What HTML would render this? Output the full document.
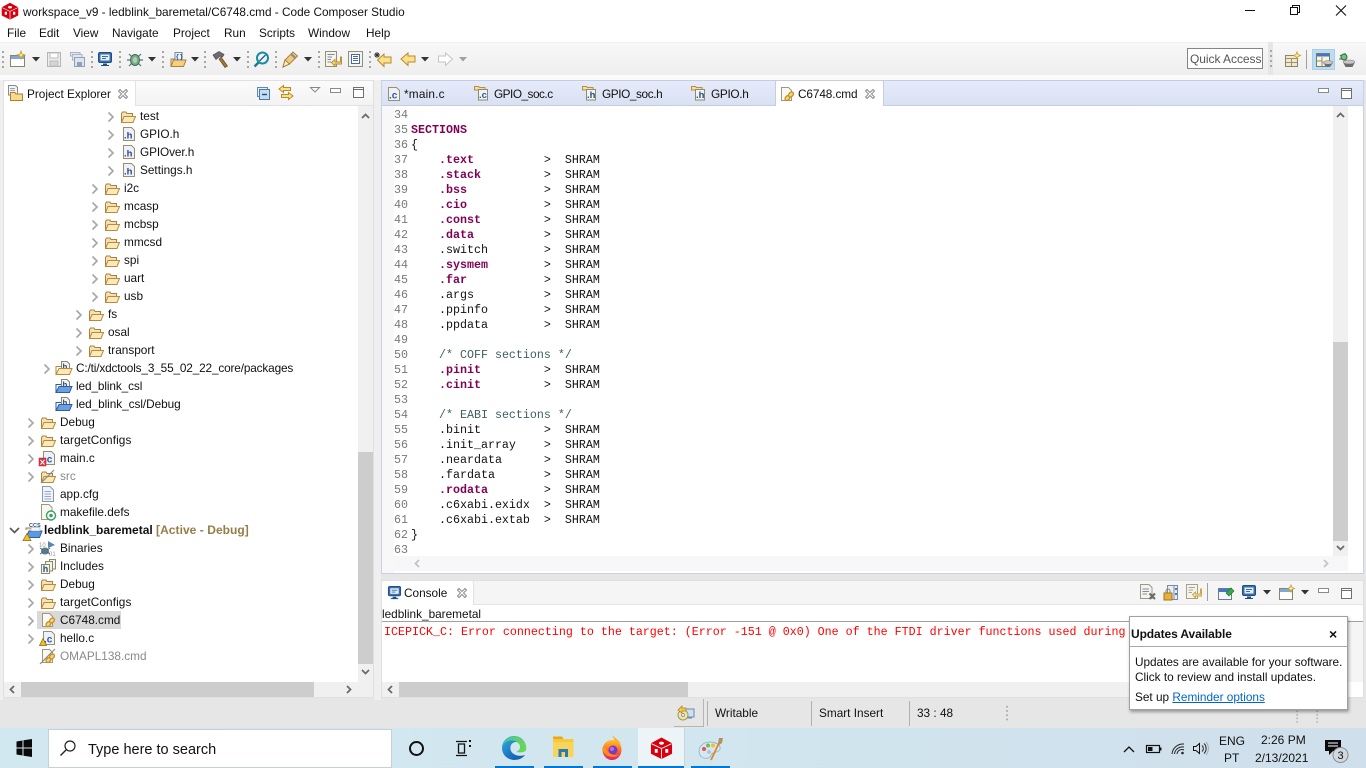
<!DOCTYPE html>
<html><head><meta charset="utf-8"><title>Code Composer Studio</title>
<style>
*{box-sizing:border-box}
html,body{margin:0;padding:0;width:1366px;height:768px;overflow:hidden;background:#e6e6e6;font-family:"Liberation Sans",sans-serif;font-size:11.8px;color:#111}
.a{position:absolute}
.t{position:absolute;white-space:pre;line-height:16px;height:16px}
.m{position:absolute;white-space:pre;font-family:"Liberation Mono",monospace;font-size:11.67px;line-height:15px;height:15px;color:#111;margin-top:1px}
.n{position:absolute;left:381px;width:27px;text-align:right;font-family:"Liberation Mono",monospace;font-size:11.67px;line-height:15px;color:#787878;margin-top:1px}
.k{color:#7f0055;font-weight:bold}
.c{color:#3f5f5f}
svg{position:absolute;left:0;top:0}
.g{color:#8a8a8a}
</style></head><body>
<div class="a" style="left:0;top:0;width:1366px;height:42px;background:#fff"></div>
<div class="a" style="left:0;top:42px;width:1268px;height:33px;background:linear-gradient(#f8f8f8,#eeeeee);border-top:1px solid #f0f0f0"></div>
<div class="a" style="left:1273px;top:42px;width:93px;height:33px;background:linear-gradient(#f8f8f8,#eeeeee);border-top:1px solid #f0f0f0"></div>
<div class="a" style="left:0;top:75px;width:1366px;height:5px;background:#fafafa"></div>
<div class="a" style="left:0;top:80px;width:3px;height:620px;background:#efefef"></div>
<div class="a" style="left:374px;top:80px;width:7px;height:620px;background:#efefef"></div>
<div class="t" style="left:23px;top:4px">workspace_v9 - ledblink_baremetal/C6748.cmd - Code Composer Studio</div>
<div class="t" style="left:7px;top:25px">File</div><div class="t" style="left:39px;top:25px">Edit</div><div class="t" style="left:73px;top:25px">View</div><div class="t" style="left:112px;top:25px">Navigate</div><div class="t" style="left:173px;top:25px">Project</div><div class="t" style="left:224px;top:25px">Run</div><div class="t" style="left:259px;top:25px">Scripts</div><div class="t" style="left:308px;top:25px">Window</div><div class="t" style="left:366px;top:25px">Help</div>

<!-- left panel -->
<div class="a" style="left:3px;top:80px;width:371px;height:618px;background:#fff;border:1px solid #e0e0e0"></div>
<div class="a" style="left:4px;top:81px;width:369px;height:24px;background:linear-gradient(#fbfbfb,#f3f3f3)"></div>
<div class="a" style="left:3px;top:80px;width:133px;height:26px;background:#fff;border:1px solid #e2e2e2;border-bottom:0;border-radius:3px 3px 0 0"></div>
<div class="a" style="left:136px;top:105px;width:237px;height:1px;background:#e2e2e2"></div>
<div class="a" style="left:358px;top:106px;width:15px;height:576px;background:#f0f0f0"></div>
<div class="a" style="left:358px;top:452px;width:15px;height:212px;background:#cdcdcd"></div>
<div class="a" style="left:4px;top:682px;width:369px;height:15px;background:#f0f0f0"></div>
<div class="a" style="left:21px;top:682px;width:293px;height:15px;background:#cdcdcd"></div>
<div class="a" style="left:37px;top:611px;width:84px;height:18px;background:#d9d9d9"></div>
<div class="t" style="left:27px;top:86px">Project Explorer</div>
<div class="t" style="left:140px;top:108px">test</div>
<div class="t" style="left:140px;top:126px">GPIO.h</div>
<div class="t" style="left:140px;top:144px;letter-spacing:-.1px">GPIOver.h</div>
<div class="t" style="left:140px;top:162px">Settings.h</div>
<div class="t" style="left:124px;top:180px">i2c</div>
<div class="t" style="left:124px;top:198px">mcasp</div>
<div class="t" style="left:124px;top:216px">mcbsp</div>
<div class="t" style="left:124px;top:234px">mmcsd</div>
<div class="t" style="left:124px;top:252px">spi</div>
<div class="t" style="left:124px;top:270px">uart</div>
<div class="t" style="left:124px;top:288px">usb</div>
<div class="t" style="left:108px;top:306px">fs</div>
<div class="t" style="left:108px;top:324px">osal</div>
<div class="t" style="left:108px;top:342px">transport</div>
<div class="t" style="left:76px;top:360px;letter-spacing:-.15px">C:/ti/xdctools_3_55_02_22_core/packages</div>
<div class="t" style="left:76px;top:378px;letter-spacing:-.1px">led_blink_csl</div>
<div class="t" style="left:76px;top:396px;letter-spacing:-.05px">led_blink_csl/Debug</div>
<div class="t" style="left:60px;top:414px">Debug</div>
<div class="t" style="left:60px;top:432px;letter-spacing:.1px">targetConfigs</div>
<div class="t" style="left:60px;top:450px">main.c</div>
<div class="t g" style="left:60px;top:468px">src</div>
<div class="t" style="left:60px;top:486px">app.cfg</div>
<div class="t" style="left:60px;top:504px">makefile.defs</div>
<div class="t" style="left:44px;top:522px;font-weight:bold;font-size:12px">ledblink_baremetal <span style="color:#957d47;letter-spacing:.05px">[Active - Debug]</span></div>
<div class="t" style="left:60px;top:540px">Binaries</div>
<div class="t" style="left:60px;top:558px">Includes</div>
<div class="t" style="left:60px;top:576px">Debug</div>
<div class="t" style="left:60px;top:594px;letter-spacing:.1px">targetConfigs</div>
<div class="t" style="left:60px;top:612px">C6748.cmd</div>
<div class="t" style="left:60px;top:630px">hello.c</div>
<div class="t g" style="left:60px;top:648px">OMAPL138.cmd</div>

<!-- editor -->
<div class="a" style="left:381px;top:80px;width:983px;height:494px;background:#fff;border:1px solid #c9d1e4;border-top:1px solid #c3cce0"></div>
<div class="a" style="left:382px;top:81px;width:981px;height:24px;background:linear-gradient(#e6ebfb,#d9e1f2)"></div>
<div class="a" style="left:382px;top:105px;width:981px;height:1px;background:#c5cde0"></div>
<div class="a" style="left:775px;top:80px;width:109px;height:26px;background:#fff;border:1px solid #c5cde0;border-bottom:0;border-radius:2px 2px 0 0"></div>
<div class="a" style="left:382px;top:106px;width:12px;height:467px;background:#f8f8f8"></div>
<div class="a" style="left:1333px;top:106px;width:15px;height:450px;background:#f0f0f0"></div>
<div class="a" style="left:1333px;top:342px;width:15px;height:199px;background:#cdcdcd"></div>
<div class="a" style="left:394px;top:556px;width:954px;height:15px;background:#f7f7f7"></div>
<div class="t" style="left:404px;top:86px;letter-spacing:.2px">*main.c</div>
<div class="t" style="left:494px;top:86px;letter-spacing:-.5px">GPIO_soc.c</div>
<div class="t" style="left:602px;top:86px;letter-spacing:-.4px">GPIO_soc.h</div>
<div class="t" style="left:711px;top:86px;letter-spacing:-.3px">GPIO.h</div>
<div class="t" style="left:798px;top:86px;letter-spacing:-.1px">C6748.cmd</div>

<div class="n" style="top:107px">34</div><div class="n" style="top:122px">35</div><div class="n" style="top:137px">36</div><div class="n" style="top:152px">37</div><div class="n" style="top:167px">38</div><div class="n" style="top:182px">39</div><div class="n" style="top:197px">40</div><div class="n" style="top:212px">41</div><div class="n" style="top:227px">42</div><div class="n" style="top:242px">43</div><div class="n" style="top:257px">44</div><div class="n" style="top:272px">45</div><div class="n" style="top:287px">46</div><div class="n" style="top:302px">47</div><div class="n" style="top:317px">48</div><div class="n" style="top:332px">49</div><div class="n" style="top:347px">50</div><div class="n" style="top:362px">51</div><div class="n" style="top:377px">52</div><div class="n" style="top:392px">53</div><div class="n" style="top:407px">54</div><div class="n" style="top:422px">55</div><div class="n" style="top:437px">56</div><div class="n" style="top:452px">57</div><div class="n" style="top:467px">58</div><div class="n" style="top:482px">59</div><div class="n" style="top:497px">60</div><div class="n" style="top:512px">61</div><div class="n" style="top:527px">62</div><div class="n" style="top:542px">63</div>

<div class="m" style="left:411px;top:122px"><span class="k">SECTIONS</span></div>
<div class="m" style="left:411px;top:137px">{</div>
<div class="m" style="left:411px;top:152px">    <span class="k">.text</span>          &gt;  SHRAM</div>
<div class="m" style="left:411px;top:167px">    <span class="k">.stack</span>         &gt;  SHRAM</div>
<div class="m" style="left:411px;top:182px">    <span class="k">.bss</span>           &gt;  SHRAM</div>
<div class="m" style="left:411px;top:197px">    <span class="k">.cio</span>           &gt;  SHRAM</div>
<div class="m" style="left:411px;top:212px">    <span class="k">.const</span>         &gt;  SHRAM</div>
<div class="m" style="left:411px;top:227px">    <span class="k">.data</span>          &gt;  SHRAM</div>
<div class="m" style="left:411px;top:242px">    .switch        &gt;  SHRAM</div>
<div class="m" style="left:411px;top:257px">    <span class="k">.sysmem</span>        &gt;  SHRAM</div>
<div class="m" style="left:411px;top:272px">    <span class="k">.far</span>           &gt;  SHRAM</div>
<div class="m" style="left:411px;top:287px">    .args          &gt;  SHRAM</div>
<div class="m" style="left:411px;top:302px">    .ppinfo        &gt;  SHRAM</div>
<div class="m" style="left:411px;top:317px">    .ppdata        &gt;  SHRAM</div>
<div class="m" style="left:411px;top:347px">    <span class="c">/* COFF sections */</span></div>
<div class="m" style="left:411px;top:362px">    <span class="k">.pinit</span>         &gt;  SHRAM</div>
<div class="m" style="left:411px;top:377px">    <span class="k">.cinit</span>         &gt;  SHRAM</div>
<div class="m" style="left:411px;top:407px">    <span class="c">/* EABI sections */</span></div>
<div class="m" style="left:411px;top:422px">    .binit         &gt;  SHRAM</div>
<div class="m" style="left:411px;top:437px">    .init_array    &gt;  SHRAM</div>
<div class="m" style="left:411px;top:452px">    .neardata      &gt;  SHRAM</div>
<div class="m" style="left:411px;top:467px">    .fardata       &gt;  SHRAM</div>
<div class="m" style="left:411px;top:482px">    <span class="k">.rodata</span>        &gt;  SHRAM</div>
<div class="m" style="left:411px;top:497px">    .c6xabi.exidx  &gt;  SHRAM</div>
<div class="m" style="left:411px;top:512px">    .c6xabi.extab  &gt;  SHRAM</div>
<div class="m" style="left:411px;top:527px">}</div>

<!-- console -->
<div class="a" style="left:381px;top:580px;width:983px;height:118px;background:#fff;border:1px solid #e0e0e0"></div>
<div class="a" style="left:382px;top:581px;width:981px;height:24px;background:#f5f5f5;border-bottom:1px solid #e4e4e4"></div>
<div class="a" style="left:381px;top:580px;width:93px;height:25px;background:#fff;border:1px solid #e2e2e2;border-bottom:0;border-radius:3px 3px 0 0"></div>
<div class="t" style="left:404px;top:585px">Console</div>
<div class="t" style="left:382px;top:606px">ledblink_baremetal</div>
<div class="a" style="left:382px;top:621px;width:981px;height:1px;background:#a0a0a0"></div>
<div class="m" style="left:384px;top:624px;color:#ff0000;width:745px;overflow:hidden">ICEPICK_C: Error connecting to the target: (Error -151 @ 0x0) One of the FTDI driver functions used during</div>
<div class="a" style="left:1348px;top:622px;width:15px;height:60px;background:#f5f5f5"></div>
<div class="a" style="left:382px;top:682px;width:966px;height:15px;background:#f0f0f0"></div>
<div class="a" style="left:399px;top:682px;width:289px;height:15px;background:#cdcdcd"></div>

<!-- status -->
<div class="a" style="left:674px;top:699px;width:30px;height:28px;border-right:1px solid #b4b4b4;border-bottom:1px solid #b4b4b4"></div>
<div class="a" style="left:707px;top:701px;width:1px;height:25px;background:#b0b0b0"></div>
<div class="a" style="left:811px;top:701px;width:1px;height:25px;background:#b0b0b0"></div>
<div class="a" style="left:909px;top:701px;width:1px;height:25px;background:#b0b0b0"></div>
<div class="t" style="left:715px;top:705px">Writable</div>
<div class="t" style="left:819px;top:705px">Smart Insert</div>
<div class="t" style="left:917px;top:705px">33 : 48</div>

<!-- taskbar -->
<div class="a" style="left:0;top:728px;width:1366px;height:40px;background:linear-gradient(90deg,#d2e8f0 0,#d1e6ee 50%,#cfdfec 100%)"></div>
<div class="a" style="left:48px;top:729px;width:344px;height:39px;background:#fff;border:1px solid #c8d0d4"></div>
<div class="a" style="left:638px;top:728px;width:46px;height:40px;background:#ecf4f8"></div>
<div class="a" style="left:495px;top:766px;width:39px;height:2px;background:#0078d7"></div>
<div class="a" style="left:544px;top:766px;width:39px;height:2px;background:#0078d7"></div>
<div class="a" style="left:593px;top:766px;width:39px;height:2px;background:#0078d7"></div>
<div class="a" style="left:638px;top:766px;width:46px;height:2px;background:#0078d7"></div>
<div class="a" style="left:691px;top:766px;width:39px;height:2px;background:#0078d7"></div>
<div class="t" style="left:88px;top:742px;font-size:14.5px">Type here to search</div>
<div class="t" style="left:1219px;top:733px;font-size:12px">ENG</div>
<div class="t" style="left:1224px;top:750px;font-size:12px">PT</div>
<div class="t" style="left:1261px;top:732px;font-size:12px">2:26 PM</div>
<div class="t" style="left:1255px;top:750px;font-size:12px">2/13/2021</div>

<!-- Quick access -->
<div class="a" style="left:1187px;top:48px;width:76px;height:21px;background:#fff;border:1px solid #858585"></div>
<div class="t" style="left:1190px;top:51px;color:#555;font-size:12px;letter-spacing:-.05px">Quick Access</div>
<div class="a" style="left:1312px;top:49px;width:23px;height:21px;background:#bcdcf6;border:1px solid #a6d0f0"></div>

<svg width="1366" height="768" viewBox="0 0 1366 768" xmlns="http://www.w3.org/2000/svg">
<defs>
<linearGradient id="eg" x1="0" y1="0" x2="1" y2="1"><stop offset="0" stop-color="#36b0d8"/><stop offset=".6" stop-color="#1a6fc0"/><stop offset="1" stop-color="#0b5aa8"/></linearGradient>
<linearGradient id="eg2" x1="0" y1="0" x2="1" y2="0"><stop offset="0" stop-color="#3fc6a8"/><stop offset="1" stop-color="#6cd84e"/></linearGradient>
<linearGradient id="ff" x1="0" y1="0" x2="0" y2="1"><stop offset="0" stop-color="#ffc428"/><stop offset=".5" stop-color="#ff6b28"/><stop offset="1" stop-color="#e0206a"/></linearGradient>
<symbol id="ch" viewBox="0 0 8 12"><path d="M1.500 1.500L6 6L1.500 10.500" fill="none" stroke="#a8a8a8" stroke-width="1.700"/></symbol>
<symbol id="f" viewBox="0 0 16 16"><path d="M1.500 13.500V4.500L2.500 3H6L7 4.500H12.500V7" fill="#f6e2b0" stroke="#a9803f"/><path d="M1.500 13.500L4 7.500H15.500L13 13.500Z" fill="#fde9b8" stroke="#b88a3e"/></symbol>
<symbol id="fs" viewBox="0 0 16 16"><path d="M1.500 13.500V4.500L2.500 3H6L7 4.500H12.500V7" fill="#f6e2b0" stroke="#a9803f"/><path d="M1.500 13.500L4 7.500H15.500L13 13.500Z" fill="#fde9b8" stroke="#b88a3e"/><path d="M1 14L14 1" stroke="#8a8a8a" stroke-width="1.200"/></symbol>
<symbol id="h" viewBox="0 0 16 16"><path d="M2.500 1.500H10.500L13.500 4.500V14.500H2.500Z" fill="#eef2f8" stroke="#98906c"/><text x="3" y="12.500" font-family="Liberation Sans" font-weight="bold" font-size="9.500" fill="#2c4a7c">.h</text></symbol>
<symbol id="c" viewBox="0 0 16 16"><path d="M2.500 1.500H10.500L13.500 4.500V14.500H2.500Z" fill="#eef2f8" stroke="#98906c"/><text x="3" y="12.500" font-family="Liberation Sans" font-weight="bold" font-size="10" fill="#2c5a9c">.c</text></symbol>
<symbol id="fh" viewBox="0 0 17 16"><path d="M.5 1.500H4.500L5.500 2.500H11V5H.5Z" fill="#f6df9e" stroke="#b59040"/><path d="M4.500 4.500H13.500V15H4.500Z" fill="#f0f3f8" stroke="#8f8a6a"/><text x="5" y="13" font-family="Liberation Sans" font-weight="bold" font-size="9.500" fill="#2c4a7c">.h</text></symbol>
<symbol id="fc" viewBox="0 0 17 16"><path d="M.5 1.500H4.500L5.500 2.500H11V5H.5Z" fill="#f6df9e" stroke="#b59040"/><path d="M4.500 4.500H13.500V15H4.500Z" fill="#f0f3f8" stroke="#8f8a6a"/><text x="5" y="13" font-family="Liberation Sans" font-weight="bold" font-size="9.500" fill="#2c5a9c">.c</text></symbol>
<symbol id="cmd" viewBox="0 0 16 16"><path d="M2.500 1.500H9.500L12.500 4.500V14.500H2.500Z" fill="#f8f8f4" stroke="#a0987a"/><g fill="none" stroke="#c8922a" stroke-width="1.400"><ellipse cx="8.500" cy="12" rx="2.800" ry="2" transform="rotate(-45 8.500 12)" fill="#f6d878"/><ellipse cx="12" cy="8.500" rx="2.800" ry="2" transform="rotate(-45 12 8.500)" fill="#f6d878"/></g></symbol>
<symbol id="pk" viewBox="0 0 18 16"><path d="M6.500 1.500H12L14.500 4V11H6.500Z" fill="#f1f4f8" stroke="#8a8468"/><text x="7.500" y="9.500" font-family="Liberation Sans" font-weight="bold" font-size="8" fill="#2c4a7c">h</text><path d="M1 14.500L4 8.500H17L14.500 14.500Z" fill="#fde9b8" stroke="#b88a3e"/><path d="M1 14.500V6.500H6" fill="none" stroke="#b88a3e"/></symbol>
<symbol id="pb" viewBox="0 0 18 16"><path d="M6.500 1.500H12L14.500 4V11H6.500Z" fill="#f1f4f8" stroke="#8a8468"/><text x="7.500" y="9.500" font-family="Liberation Sans" font-weight="bold" font-size="8" fill="#2c4a7c">h</text><path d="M1 14.500L4 8.500H17L14.500 14.500Z" fill="#6c9fe0" stroke="#2a5fa8"/><path d="M1 14.500V6.500H6" fill="none" stroke="#2a5fa8"/></symbol>
<symbol id="x" viewBox="0 0 12 12"><path d="M1.500 3L3 1.500L6 4.500L9 1.500L10.500 3L7.500 6L10.500 9L9 10.500L6 7.500L3 10.500L1.500 9L4.500 6Z" fill="#fff" stroke="#8c8c8c"/></symbol>
<symbol id="dots" viewBox="0 0 3 20"><g fill="#a8a8a0"><rect y="1" width="2" height="2"/><rect y="6" width="2" height="2"/><rect y="11" width="2" height="2"/><rect y="16" width="2" height="2"/></g></symbol>
<symbol id="ar" viewBox="0 0 8 5"><path d="M0 0H8L4 4.500Z" fill="#333"/></symbol>
<symbol id="mon" viewBox="0 0 16 16"><rect x="1.500" y="1.500" width="13" height="10" rx="1.500" fill="#3a6ea8" stroke="#1f4e86"/><rect x="3.500" y="3.500" width="9" height="6" fill="#e6eff8"/><path d="M5 5.500H11M5 7.500H9" stroke="#3a6ea8"/><path d="M6 12.500H10V14H12V15H4V14H6Z" fill="#1f4e86"/></symbol>
<symbol id="mn" viewBox="0 0 12 8"><rect x=".5" y="1.500" width="10" height="4" fill="#fff" stroke="#8a8a8a"/></symbol>
<symbol id="mx" viewBox="0 0 12 12"><rect x=".5" y=".5" width="10" height="10" fill="#fff" stroke="#707070"/><path d="M1 2.500H10" stroke="#707070"/></symbol>
<symbol id="cube" viewBox="0 0 24 24"><path d="M12 1L23 7V18L12 23.500L1 18V7Z" fill="#d8000c"/><path d="M1.500 7.500L12 12.500L22.500 7.500M12 12.500V23" fill="none" stroke="#fff" stroke-width=".9"/><ellipse cx="12" cy="7" rx="2.600" ry="1.600" fill="#fff"/><rect x="5" y="13" width="3" height="4" fill="#fff"/><rect x="16" y="13" width="3" height="4" fill="#fff"/></symbol>
</defs>

<!-- title icon -->
<use href="#cube" x="1" y="2" width="18" height="18"/>
<!-- window controls -->
<path d="M1245 10.500H1255" stroke="#111"/>
<path d="M1290.500 7.500H1297.500V14.500H1290.500ZM1292.500 7V5.500H1299.500V12.500H1298" fill="none" stroke="#111"/>
<path d="M1336 5.500L1346 15.500M1346 5.500L1336 15.500" stroke="#111" stroke-width="1.100"/>

<!-- toolbar separators -->
<use href="#dots" x="2" y="50" width="3" height="20"/><use href="#dots" x="91" y="50" width="3" height="20"/><use href="#dots" x="119" y="50" width="3" height="20"/><use href="#dots" x="162" y="50" width="3" height="20"/><use href="#dots" x="204" y="50" width="3" height="20"/><use href="#dots" x="247" y="50" width="3" height="20"/><use href="#dots" x="275" y="50" width="3" height="20"/><use href="#dots" x="318" y="50" width="3" height="20"/><use href="#dots" x="369" y="50" width="3" height="20"/><use href="#dots" x="1270" y="48" width="3" height="22"/>
<use href="#ar" x="32" y="57" width="8" height="5"/><use href="#ar" x="148" y="57" width="8" height="5"/><use href="#ar" x="191" y="57" width="8" height="5"/><use href="#ar" x="233" y="57" width="8" height="5"/><use href="#ar" x="304" y="57" width="8" height="5"/><use href="#ar" x="421" y="57" width="8" height="5"/>
<path d="M459 57H467L463 61.500Z" fill="#a0a0a0"/>
<!-- new -->
<rect x="10.500" y="55.500" width="14" height="11" fill="#fff" stroke="#8a8468"/><rect x="11" y="56" width="13" height="3" fill="#7ea8d8"/><path d="M21 51L22 54L25 55L22 56L21 59L20 56L17 55L20 54Z" fill="#fff0a8" stroke="#c89a28" stroke-width=".8"/>
<!-- save -->
<path d="M47.500 52.500H60.500V66.500H47.500Z" fill="#ececec" stroke="#b4b4b4"/><rect x="50" y="53" width="8" height="5" fill="#fff" stroke="#bcbcbc"/><rect x="50" y="61" width="8" height="5" fill="#d4d4d4" stroke="#bcbcbc"/>
<path d="M70.500 52.500H80V56H70.500Z" fill="#e4e8f0" stroke="#aab4c4"/><path d="M72.500 54.500H82V60H72.500Z" fill="#e4e8f0" stroke="#aab4c4"/><path d="M74.500 57.500H84.500V66.500H74.500Z" fill="#dce4f0" stroke="#90a0b8"/><rect x="77" y="62" width="5" height="4" fill="#90a0b8"/>
<use href="#mon" x="97" y="51" width="16" height="16"/>
<!-- bug -->
<g transform="translate(127,51)"><path d="M2 3L5 6M14 3L11 6M0 9H3M16 9H13M2 15L5 12M14 15L11 12" stroke="#56707a" stroke-width="1.200"/><ellipse cx="8" cy="9" rx="4.500" ry="5.500" fill="#7ca890" stroke="#3d6a5a"/><ellipse cx="8" cy="9" rx="2" ry="3" fill="#b4d4a0"/></g>
<!-- open -->
<g transform="translate(170,51)"><path d="M1 15V8H5" fill="#f6e2b0" stroke="#a9803f"/><path d="M1 15.500L3.500 9H16L13.500 15.500Z" fill="#fbcf78" stroke="#a9803f"/><path d="M5 1.500H12V9H5Z" fill="#f0f4fa" stroke="#7a8aa0"/><text x="5.500" y="7.500" font-family="Liberation Mono" font-weight="bold" font-size="6.500" fill="#1f4e86">{}</text></g>
<!-- hammer -->
<g transform="translate(212,51)"><path d="M9 6L15.500 15L13 16.500L7 8Z" fill="#a0743c" stroke="#6a4a22" stroke-width=".7"/><path d="M1 4L7 .5L12 3.500L10.500 6L8 5L4 8.500Z" fill="#6c6c70" stroke="#48484c" stroke-width=".7"/></g>
<!-- search -->
<g transform="translate(253,51)"><circle cx="9.500" cy="7" r="5.500" fill="none" stroke="#1a8ca0" stroke-width="2"/><path d="M5.500 11.500L1.500 15.500" stroke="#1a7c90" stroke-width="2.400"/><path d="M6.500 10L12.500 4" stroke="#1a5f90" stroke-width="1.300"/></g>
<!-- pencil -->
<g transform="translate(282,51)"><path d="M1 16L3 9L11 1L15.500 5L7.500 13Z" fill="#f0c880" stroke="#a88038"/><path d="M1 16L3 9L7.500 13Z" fill="#fff0d0" stroke="#a88038"/><path d="M9 3L13.500 7" stroke="#888" stroke-width="2"/></g>
<!-- doc tools -->
<g transform="translate(325,51)"><path d="M.5 .5H11.500V15.500H.5Z" fill="#f4f4e8" stroke="#96906c"/><path d="M2.500 3.500H9.500M2.500 6H7M2.500 8.500H6M2.500 11H6" stroke="#7a8ca8"/><path d="M15.500 6V11H10V8.500L6.500 11.500L10 15V13H16.500V6Z" fill="#fde08a" stroke="#b88a28" stroke-width=".9"/></g>
<g transform="translate(348,51)"><path d="M.5 .5H14.500V15.500H.5Z" fill="#f0f4f8" stroke="#96906c"/><rect x="3.500" y="3.500" width="8" height="9" fill="#fff" stroke="#4a6a9a"/><path d="M5 5.500H10M5 7.500H10M5 9.500H10" stroke="#4a6a9a"/></g>
<!-- nav -->
<g transform="translate(375,51)"><path d="M2 1V7M-1 4H5M0 2L4 6M4 2L0 6" stroke="#333" stroke-width=".9"/><path d="M16 6V12H9V15.500L2.500 9L9 3V6Z" fill="#fde08a" stroke="#b98a28"/></g>
<path d="M415 56V62H408V65.500L401 59L408 53V56Z" fill="#fde08a" stroke="#b98a28"/>
<path d="M438.500 56V62H445.500V65.500L452.500 59L445.500 53V56Z" fill="#fff" stroke="#c4c4c4"/>

<!-- right perspective -->
<g transform="translate(1285,52)"><rect x=".5" y="3.500" width="12" height="11" fill="#f4e8cc" stroke="#8a8468"/><path d="M1 6.500H12M6.500 7V14M1 10.500H12" stroke="#9a9470"/><path d="M12 0L13 2.500L15.500 3.500L13 4.500L12 7L11 4.500L8.500 3.500L11 2.500Z" fill="#fff0a8" stroke="#c89a28" stroke-width=".8"/></g>
<path d="M1306.500 50V69" stroke="#a0a0a0"/>
<g transform="translate(1316,53)"><rect x=".5" y=".5" width="13" height="13" fill="#fdf4dc" stroke="#7a7a6a"/><rect x="1" y="1" width="12" height="2.500" fill="#3e78c8"/><path d="M6 4V13M1 8H6" stroke="#8a8a7a"/><path d="M7 9H17L14.500 13.500H9.500Z" fill="#6c6c6c"/><ellipse cx="12" cy="9.500" rx="5" ry="1.800" fill="#c8c8c8" stroke="#707070" stroke-width=".5"/></g>
<g transform="translate(1338,52)"><path d="M2 3L6 7M7 1V4M1 7H4" stroke="#3a7a5a"/><ellipse cx="6" cy="5" rx="3" ry="3" fill="#7cc070" stroke="#2a6a4a"/><path d="M5 10H17L14.500 15H7.500Z" fill="#6c6c6c"/><ellipse cx="11" cy="10" rx="6" ry="2" fill="#c8c8c8" stroke="#707070" stroke-width=".5"/></g>

<!-- view controls left -->
<g transform="translate(7,85)"><path d="M1.500 .5H8.500L10.500 2.500V10H1.500Z" fill="#f4f4f4" stroke="#8a8a8a"/><path d="M3 3.500H8M3 5.500H8" stroke="#a0a0a0"/><path d="M3.500 15.500V7.500H8L9 9H15.500V15.500Z" fill="#fbd98a" stroke="#a9803f"/></g>
<use href="#x" x="117" y="88" width="12" height="12"/>
<g transform="translate(257,87)"><rect x=".5" y=".5" width="10" height="9" fill="#eaf0f8" stroke="#5a8ab8"/><rect x="2.500" y="2.500" width="10" height="10" fill="#c8dcf0" stroke="#4a7aa8"/><path d="M5 7.500H10" stroke="#1f4e86" stroke-width="1.400"/></g>
<g fill="#fde08a" stroke="#b98a28"><path d="M283.500 85.500L279 89L283.500 92.500V90.500H290.500V87.500H283.500Z"/><path d="M288.500 92.500L293 96L288.500 99.500V97.500H281.500V94.500H288.500Z"/></g>
<path d="M310.500 87.500H319.500L315 92Z" fill="#fff" stroke="#888"/>
<use href="#mn" x="330" y="87" width="12" height="8"/><use href="#mx" x="353" y="87" width="12" height="12"/>

<!-- scroll arrows -->
<g fill="none" stroke="#6a6a6a" stroke-width="1.800"><path d="M362 118L365.500 114.500L369 118"/><path d="M362 670L365.500 673.500L369 670"/><path d="M14 686L10.500 689.500L14 693"/><path d="M347 686L350.500 689.500L347 693"/><path d="M1337 117L1340.500 113.500L1344 117"/><path d="M1337 546L1340.500 549.500L1344 546"/><path d="M392 686L388.500 689.500L392 693"/></g>
<g fill="none" stroke="#c4c4c4" stroke-width="1.800"><path d="M419 560L415.500 563.500L419 567"/><path d="M1324 560L1327.500 563.500L1324 567"/></g>

<!-- tree chevrons -->
<g transform="translate(0,1)">
<use href="#ch" x="107" y="110" width="8" height="12"/><use href="#ch" x="107" y="128" width="8" height="12"/><use href="#ch" x="107" y="146" width="8" height="12"/><use href="#ch" x="107" y="164" width="8" height="12"/>
<use href="#ch" x="91" y="182" width="8" height="12"/><use href="#ch" x="91" y="200" width="8" height="12"/><use href="#ch" x="91" y="218" width="8" height="12"/><use href="#ch" x="91" y="236" width="8" height="12"/><use href="#ch" x="91" y="254" width="8" height="12"/><use href="#ch" x="91" y="272" width="8" height="12"/><use href="#ch" x="91" y="290" width="8" height="12"/>
<use href="#ch" x="75" y="308" width="8" height="12"/><use href="#ch" x="75" y="326" width="8" height="12"/><use href="#ch" x="75" y="344" width="8" height="12"/>
<use href="#ch" x="43" y="362" width="8" height="12"/>
<use href="#ch" x="27" y="416" width="8" height="12"/><use href="#ch" x="27" y="434" width="8" height="12"/><use href="#ch" x="27" y="452" width="8" height="12"/><use href="#ch" x="27" y="470" width="8" height="12"/>
<use href="#ch" x="27" y="542" width="8" height="12"/><use href="#ch" x="27" y="560" width="8" height="12"/><use href="#ch" x="27" y="578" width="8" height="12"/><use href="#ch" x="27" y="596" width="8" height="12"/><use href="#ch" x="27" y="614" width="8" height="12"/><use href="#ch" x="27" y="632" width="8" height="12"/>
</g>
<path d="M10 528L14.500 532.500L19 528" fill="none" stroke="#555" stroke-width="1.600"/>

<!-- tree icons -->
<use href="#f" x="120" y="109" width="16" height="16"/>
<use href="#h" x="121" y="126" width="16" height="16"/><use href="#h" x="121" y="144" width="16" height="16"/><use href="#h" x="121" y="162" width="16" height="16"/>
<use href="#f" x="104" y="181" width="16" height="16"/><use href="#f" x="104" y="199" width="16" height="16"/><use href="#f" x="104" y="217" width="16" height="16"/><use href="#f" x="104" y="235" width="16" height="16"/><use href="#f" x="104" y="253" width="16" height="16"/><use href="#f" x="104" y="271" width="16" height="16"/><use href="#f" x="104" y="289" width="16" height="16"/>
<use href="#f" x="88" y="307" width="16" height="16"/><use href="#f" x="88" y="325" width="16" height="16"/><use href="#f" x="88" y="343" width="16" height="16"/>
<use href="#pk" x="55" y="360" width="18" height="16"/><use href="#pb" x="55" y="378" width="18" height="16"/><use href="#pb" x="55" y="396" width="18" height="16"/>
<use href="#f" x="40" y="415" width="16" height="16"/><use href="#f" x="40" y="433" width="16" height="16"/>
<use href="#c" x="41" y="450" width="16" height="16"/>
<rect x="39" y="458" width="7" height="8" fill="#d83848" stroke="#b02030" stroke-width=".5"/><path d="M40.500 460L44.500 464.500M44.500 460L40.500 464.500" stroke="#fff"/>
<use href="#fs" x="40" y="469" width="16" height="16"/>
<g transform="translate(42,486)"><path d="M.5 .5H8L11.500 4V15.500H.5Z" fill="#f0f4fa" stroke="#8898b0"/><path d="M2.500 5.500H9M2.500 8H9M2.500 10.500H9M2.500 13H9" stroke="#96a8c4"/></g>
<g transform="translate(40,504)"><path d="M1.500 .5H9L12 3.500V15.500H1.500Z" fill="#f8f8f0" stroke="#a0987a"/><circle cx="11" cy="11.500" r="4.500" fill="#fff" stroke="#3aa060" stroke-width="1.400"/><circle cx="11" cy="11.500" r="1.800" fill="#3aa060"/></g>
<!-- project -->
<g transform="translate(23,522)"><path d="M3 15.500L6 9H19L16.500 15.500Z" fill="#5a9ae0" stroke="#2a5fa8"/><path d="M3 8V6H8L9 7.500H16" fill="#f6e2b0" stroke="#a9803f"/><path d="M8 5.500H17V9H8Z" fill="#f4f4f4" stroke="#a0a0a0" stroke-width=".5"/><text x="6" y="5" font-family="Liberation Sans" font-weight="bold" font-size="5.500" fill="#1f4e86">CCS</text><path d="M4 11.500L8 18.500H0Z" fill="#f4c020" stroke="#886010" stroke-width=".7"/></g>
<g transform="translate(39,540)"><text x="0" y="7" font-family="Liberation Sans" font-size="6" fill="#999">10</text><text x="10" y="16" font-family="Liberation Sans" font-size="6" fill="#999">01</text><path d="M9 1L16 5L9 8Z" fill="#5a84a8"/><ellipse cx="6" cy="11" rx="4" ry="3.500" fill="#5a7a8c"/><path d="M1 8L4 10M1 14L4 12M11 8L8 10M11 14L8 12" stroke="#4a6070"/></g>
<g transform="translate(40,558)"><path d="M9.500 1.500H15.500V11H9.500Z" fill="#f4f4e8" stroke="#8a8a6a"/><path d="M5.500 3.500H12.500V13H5.500Z" fill="#f4f4e8" stroke="#8a8a6a"/><path d="M1.500 6.500H9.500V15.500H1.500Z" fill="#f4f4e8" stroke="#8a8a6a"/><text x="2.800" y="14" font-family="Liberation Sans" font-weight="bold" font-size="9" fill="#2c4a7c">h</text></g>
<use href="#f" x="40" y="577" width="16" height="16"/><use href="#f" x="40" y="595" width="16" height="16"/>
<use href="#cmd" x="40" y="612" width="16" height="16"/>
<use href="#c" x="41" y="630" width="16" height="16"/>
<path d="M43 638.500L46.500 645.500H39.500Z" fill="#f4c020" stroke="#886010" stroke-width=".7"/>
<use href="#cmd" x="40" y="648" width="16" height="16"/><path d="M40 664L55 649" stroke="#8a8a8a" stroke-width="1.200"/>

<!-- editor tab icons -->
<use href="#c" x="386" y="86" width="16" height="16"/>
<use href="#fc" x="474" y="85" width="17" height="16"/>
<use href="#fh" x="582" y="85" width="17" height="16"/>
<use href="#fh" x="691" y="85" width="17" height="16"/>
<use href="#cmd" x="779" y="86" width="16" height="16"/>
<use href="#x" x="864" y="88" width="12" height="12"/>
<use href="#mn" x="1318" y="87" width="12" height="8"/><use href="#mx" x="1341" y="88" width="12" height="12"/>

<!-- console icons -->
<use href="#mon" x="387" y="585" width="15" height="15"/>
<use href="#x" x="456" y="587" width="12" height="12"/>
<g transform="translate(1140,584)"><path d="M.5 .5H9L12 3.500V14.500H.5Z" fill="#f4f4ee" stroke="#9a9a80"/><path d="M2.500 5H9M2.500 7.500H9M2.500 10H7" stroke="#7a8ca8"/><path d="M9.500 9.500L15 15M15 9.500L9.500 15" stroke="#6a6a6a" stroke-width="2"/></g>
<g transform="translate(1163,585)"><rect x="4.500" y=".5" width="10" height="14" fill="#e8eef8" stroke="#7a8aa8"/><path d="M11 1V14" stroke="#7a8aa8"/><rect x="12" y="3" width="2" height="2" fill="#5a7aa8"/><rect x="12" y="8" width="2" height="2" fill="#5a7aa8"/><rect x="1" y="8" width="8" height="7" fill="#e8b038" stroke="#a07818"/><path d="M3 8V6A2 2 0 0 1 7 6V8" fill="none" stroke="#8a8a6a"/></g>
<g transform="translate(1186,584)"><path d="M.5 .5H11.500V14.500H.5Z" fill="#f4f4e8" stroke="#a8a280"/><path d="M2.500 3.500H9M2.500 6H7M2.500 8.500H6" stroke="#9aa8bc"/><path d="M14.500 5V10H9.500V8L6.500 10.500L9.500 14V12H15.500V5Z" fill="#fde8a8" stroke="#c8a048" stroke-width=".9"/></g>
<path d="M1207.500 583V601" stroke="#a0a0a0"/>
<g transform="translate(1218,585)"><rect x=".5" y="3.500" width="13" height="11" fill="#f4f8fc" stroke="#6a7a90"/><rect x="1" y="4" width="12" height="3" fill="#3e78c8"/><path d="M8 8L13 3L16 6L11 11Z" fill="#38a848" stroke="#1a7a30" stroke-width=".7"/></g>
<use href="#mon" x="1241" y="584" width="16" height="16"/>
<use href="#ar" x="1263" y="590" width="8" height="5"/>
<g transform="translate(1279,585)"><rect x=".5" y="3.500" width="13" height="11" fill="#fff" stroke="#8a8468"/><rect x="1" y="4" width="12" height="3" fill="#7ea8d8"/><path d="M12 0L13 2.500L15.500 3.500L13 4.500L12 7L11 4.500L8.500 3.500L11 2.500Z" fill="#fff0a8" stroke="#c89a28" stroke-width=".8"/></g>
<use href="#ar" x="1301" y="590" width="8" height="5"/>
<use href="#mn" x="1318" y="587" width="12" height="8"/><use href="#mx" x="1341" y="588" width="12" height="12"/>

<!-- status icon -->
<g transform="translate(677,705)"><rect x="7" y="4" width="10" height="8" fill="#cfe0f4" stroke="#6a8ab0"/><path d="M10 13H15" stroke="#6a8ab0"/><circle cx="6" cy="10" r="5" fill="#e8e4c8" stroke="#a89848"/><circle cx="6" cy="10" r="1.500" fill="#fff" stroke="#a89848"/><path d="M1 5L5 1L5 3H9V6H5V8Z" fill="#f4c858" stroke="#a88018" stroke-width=".7"/></g>
<use href="#dots" x="1006" y="705" width="3" height="17"/>
<use href="#dots" x="1296" y="710" width="3" height="14"/><use href="#dots" x="1316" y="710" width="3" height="14"/>

<!-- taskbar icons -->
<g fill="#0a0a0a"><path d="M16.500 741.500L22.500 740.500V747.500H16.500Z"/><path d="M23.500 740.300L32 739V747.500H23.500Z"/><path d="M16.500 748.500H22.500V755.500L16.500 754.500Z"/><path d="M23.500 748.500H32V757L23.500 755.700Z"/></g>
<circle cx="70" cy="746" r="5" fill="none" stroke="#222" stroke-width="1.200"/><path d="M66 750L60.500 755.500" stroke="#222" stroke-width="1.400"/>
<circle cx="416.500" cy="748.500" r="6.500" fill="none" stroke="#111" stroke-width="2"/>
<path d="M456 741.500H467M456 755.500H467M458.500 744H464.500V753H458.500Z" fill="none" stroke="#111" stroke-width="1.300"/><rect x="469" y="745" width="2" height="2" fill="#111"/><rect x="469" y="740" width="2" height="2" fill="#111"/>
<!-- edge -->
<path d="M514 736A12 12 0 0 0 502 748C502 756 509 760 514 760C519 760 523 758 525 755C519 757 513 755 511 751C509 746 512 742 516 742C521 742 523 745 523 748H526A12 12 0 0 0 514 736Z" fill="url(#eg)"/>
<path d="M503 745C505 738 513 734 520 738C525 741 527 746 526 750C526 752 520 753 516 752C521 750 521 745 518 743C514 739 506 740 503 745Z" fill="url(#eg2)"/>
<!-- explorer -->
<path d="M553 736.500H562L563.500 739H573.500V757H553Z" fill="#f8d558"/><path d="M553 736.500H562L563.500 739H553Z" fill="#e8a818"/><rect x="553" y="739" width="20.500" height="3" fill="#f6c83c"/><path d="M558.500 757V749H568V757" fill="#2a7ab8"/><rect x="561.500" y="752" width="3.500" height="5" fill="#f8d558"/>
<!-- firefox -->
<ellipse cx="612" cy="750" rx="9.500" ry="10" fill="url(#ff)"/><path d="M612 735C616 739 622 742 622 748C622 744 618 742 615 741Z" fill="#ffb020"/><circle cx="613" cy="750" r="4.500" fill="#7a3ac0"/><circle cx="612" cy="749" r="2" fill="#b070e8"/><path d="M602 748C604 756 612 759 619 755C613 756 607 754 606 747Z" fill="#ff9020"/>
<!-- cube -->
<use href="#cube" x="650" y="736" width="23" height="24"/>
<!-- paint -->
<g transform="translate(699,737)"><path d="M11 5C5 5 0 9 0 14C0 20 5 22 9 21C13 20 11 17 14 16C18 15 22 14 21 10C20 7 16 5 11 5Z" fill="#d4e8f4" stroke="#88a8c0" stroke-width=".7"/><circle cx="5" cy="12" r="2" fill="#e85050"/><circle cx="9" cy="8.500" r="2" fill="#70c050"/><circle cx="14" cy="8.500" r="2" fill="#f0c030"/><circle cx="10" cy="15" r="2" fill="#b0c4d8"/><path d="M12 23L20 6" stroke="#e08820" stroke-width="1.800"/><path d="M19 6L20 1L24 1L23 6L20 8Z" fill="#b89060"/></g>
<path d="M684.500 728V766" stroke="#c8d4dc"/>
<!-- tray -->
<path d="M1124 752L1129 747L1134 752" fill="none" stroke="#111" stroke-width="1.300"/>
<rect x="1146.500" y="745.500" width="13" height="7" fill="none" stroke="#111" stroke-width="1.200"/><rect x="1148" y="747" width="4.500" height="4" fill="#111"/><rect x="1160" y="747.500" width="1.500" height="3" fill="#111"/>
<g fill="none" stroke="#222" stroke-width="1"><path d="M1172 754A11 11 0 0 1 1184 744"/><path d="M1174.500 754A8 8 0 0 1 1184 747"/><path d="M1177 754A5 5 0 0 1 1184 750"/></g><circle cx="1182.500" cy="753" r="1.300" fill="#222"/>
<path d="M1193.500 746.500H1196L1199.500 743.500V753.500L1196 750.500H1193.500Z" fill="none" stroke="#111"/><path d="M1202 745.500A4 4 0 0 1 1202 751.500M1204 743.500A7 7 0 0 1 1204 753.500" fill="none" stroke="#222"/><path d="M1206 742A10 10 0 0 1 1206 755" fill="none" stroke="#aaa"/>
<path d="M1325 740H1341V751H1333L1329 755V751H1325Z" fill="#0a0a0a"/><path d="M1328 743H1338M1328 746H1338" stroke="#fff"/>
<circle cx="1340.500" cy="755" r="7.500" fill="#d0d8e0" stroke="#8a8a8a"/>
<text x="1340.500" y="759" font-family="Liberation Sans" font-size="11" text-anchor="middle" fill="#111">3</text>
</svg>

<!-- popup -->
<div class="a" style="left:1129px;top:616px;width:219px;height:94px;background:#fff;border:1px solid #a0a0a0;box-shadow:1px 2px 3px rgba(0,0,0,.35)">
<div class="a" style="left:0;top:29px;width:217px;height:1px;background:#a8a8a8"></div>
</div>
<div class="t" style="left:1131px;top:626px;font-weight:bold;font-size:12px;letter-spacing:-.1px">Updates Available</div>
<div class="t" style="left:1329px;top:626px;font-weight:bold;font-size:14px">×</div>
<div class="t" style="left:1135px;top:654px;letter-spacing:-.03px">Updates are available for your software.</div>
<div class="t" style="left:1135px;top:669px">Click to review and install updates.</div>
<div class="t" style="left:1135px;top:689px">Set up <span style="color:#0066cc;text-decoration:underline">Reminder options</span></div>
</body></html>
